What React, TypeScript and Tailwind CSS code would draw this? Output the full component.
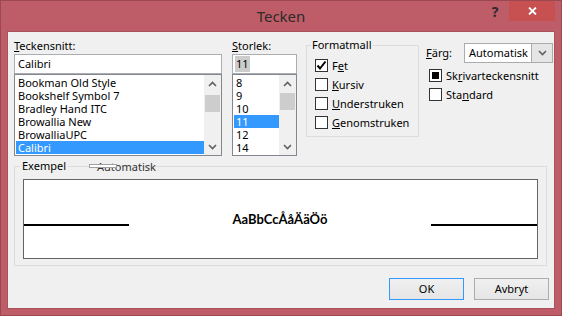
import React from 'react';

const fontRows = ['Bookman Old Style', 'Bookshelf Symbol 7', 'Bradley Hand ITC', 'Browallia New', 'BrowalliaUPC', 'Calibri'];
const sizeRows = ['8', '9', '10', '11', '12', '14'];

const Chevron: React.FC<{ up?: boolean }> = ({ up }) => (
  <svg width="9" height="6" viewBox="0 0 9 6">
    <polyline
      points={up ? '1,5 4.5,1.5 8,5' : '1,1 4.5,4.5 8,1'}
      fill="none"
      stroke="#606060"
      strokeWidth="1.6"
    />
  </svg>
);

const ScrollBar: React.FC<{ thumbTop: string }> = ({ thumbTop }) => (
  <div className="w-[17px] flex flex-col bg-[#f0f0f0]">
    <div className="h-[17px] flex items-center justify-center">
      <Chevron up />
    </div>
    <div className="flex-1">
      <div className={`${thumbTop} mx-[1px] h-[17px] bg-[#cdcdcd]`}></div>
    </div>
    <div className="h-[17px] flex items-center justify-center">
      <Chevron />
    </div>
  </div>
);

// one list box with a row highlighted
const ListBox: React.FC<{ rows: string[]; selected: number; width: string; thumbTop: string }> = ({
  rows,
  selected,
  width,
  thumbTop,
}) => (
  <div className={`${width} h-[82px] border border-[#828790] bg-white flex`}>
    <div className="flex-1 pl-[1px] pt-[1px]">
      {rows.map((r, i) => (
        <div
          key={r}
          className={`h-[13px] leading-[13px] pl-[2px] ${i === selected ? 'bg-[#3399ff] text-white' : 'text-black'}`}
        >
          {r}
        </div>
      ))}
    </div>
    <ScrollBar thumbTop={thumbTop} />
  </div>
);

const CheckBox: React.FC<{ state?: 'checked' | 'mixed' }> = ({ state }) => (
  <div className="w-[13px] h-[13px] border border-[#333333] bg-white flex items-center justify-center shrink-0">
    {state === 'checked' && (
      <svg width="11" height="11" viewBox="0 0 11 11">
        <polyline points="1.5,5.5 4,8.5 9.5,1.5" fill="none" stroke="#000" strokeWidth="2" />
      </svg>
    )}
    {state === 'mixed' && <div className="w-[7px] h-[7px] bg-black"></div>}
  </div>
);

const CheckRow: React.FC<{ state?: 'checked' | 'mixed'; children: React.ReactNode }> = ({ state, children }) => (
  <div className="h-[19px] flex items-center gap-[4px]">
    <CheckBox state={state} />
    <span className="leading-[16px]">{children}</span>
  </div>
);

const App: React.FC = () => {
  return (
    <div className="w-[562px] h-[316px] bg-[#be5c67] border border-[#9c4852] flex flex-col text-[11px] text-black font-['Noto_Sans',sans-serif]">
      {/* title bar */}
      <div className="h-[30px] grid grid-cols-[1fr_auto_1fr]">
        <div></div>
        <div className="text-[15px] text-[#2b2b2b] leading-[30px]">Tecken</div>
        <div className="flex justify-end items-start pr-[6px]">
          <div className="w-[30px] h-[20px] flex items-center justify-center text-[14px] font-bold text-[#2b2b2b] leading-none pt-[2px] pl-[2px]">
            ?
          </div>
          <div className="w-[46px] h-[20px] bg-[#c75050] flex items-center justify-center">
            <svg width="9" height="8" viewBox="0 0 9 8">
              <path d="M1 0.5 L8 7.5 M8 0.5 L1 7.5" stroke="#fff" strokeWidth="1.8" />
            </svg>
          </div>
        </div>
      </div>

      {/* client area */}
      <div className="flex-1 mx-[6px] mb-[6px] bg-[#f0f0f0] border border-[#a8525c] pt-[6px] pl-[6px] flex flex-col">
        <div className="flex items-start">
          {/* font */}
          <div className="w-[208px] flex flex-col">
            <div className="h-[16px] leading-[16px]">
              <span className="underline">T</span>eckensnitt:
            </div>
            <div className="h-[20px] border border-[#abadb3] bg-white pl-[3px] leading-[18px]">Calibri</div>
            <ListBox rows={fontRows} selected={5} width="w-[208px]" thumbTop="mt-[3px]" />
          </div>

          {/* size */}
          <div className="w-[65px] ml-[10px] flex flex-col">
            <div className="h-[16px] leading-[16px]">
              <span className="underline">S</span>torlek:
            </div>
            <div className="h-[20px] border border-[#abadb3] bg-white pl-[2px] pt-[1px] flex items-start">
              <span className="bg-[#cccccc] leading-[16px] px-[1px]">11</span>
            </div>
            <ListBox rows={sizeRows} selected={3} width="w-[65px]" thumbTop="mt-[1px]" />
          </div>

          {/* Formatmall */}
          <div className="relative w-[113px] h-[92px] ml-[9px] mt-[7px] border border-[#dcdcdc] pt-[10px] pl-[8px]">
            <div className="absolute -top-[9px] left-[4px] bg-[#f0f0f0] px-[1px] leading-[16px]">Formatmall</div>
            <CheckRow state="checked">
              F<span className="underline">e</span>t
            </CheckRow>
            <CheckRow>
              <span className="underline">K</span>ursiv
            </CheckRow>
            <CheckRow>
              <span className="underline">U</span>nderstruken
            </CheckRow>
            <CheckRow>
              <span className="underline">G</span>enomstruken
            </CheckRow>
          </div>

          {/* Färg */}
          <div className="ml-[7px] mt-[5px] flex flex-col">
            <div className="flex items-center">
              <div className="w-[38px]">
                <span className="underline">F</span>ärg:
              </div>
              <div className="w-[89px] h-[20px] border border-[#acacac] bg-white flex">
                <div className="flex-1 pl-[4px] leading-[18px]">Automatisk</div>
                <div className="w-[21px] bg-[#e5e5e5] border-l border-[#acacac] flex items-center justify-center">
                  <Chevron />
                </div>
              </div>
            </div>
            <div className="mt-[3px] pl-[3px]">
              <CheckRow state="mixed">
                Sk<span className="underline">r</span>ivarteckensnitt
              </CheckRow>
              <CheckRow>
                Sta<span className="underline">n</span>dard
              </CheckRow>
            </div>
          </div>
        </div>

        {/* Exempel */}
        <div className="relative w-[533px] h-[100px] mt-[10px] border border-[#dcdcdc] pt-[12px] px-[8px]">
          <div className="absolute -top-[9px] left-[5px] bg-[#f0f0f0] px-[2px] leading-[16px]">Exempel</div>
          <div className="absolute -top-[8px] left-[82px] leading-[16px] text-[#333]">Automatisk</div>
          <div className="absolute -top-[3px] left-[74px] w-[28px] h-[4px] border border-[#a0a0a0] bg-white"></div>
          <div className="h-[80px] border border-[#646464] bg-white pt-[32px]">
            <div className="flex items-end">
              <div className="w-[105px] h-[2px] bg-black"></div>
              <div className="flex-1 text-center font-['Lato',sans-serif] font-bold text-[13px] leading-[14px]">
                AaBbCcÅåÄäÖö
              </div>
              <div className="w-[106px] h-[2px] bg-black"></div>
            </div>
          </div>
        </div>

        {/* buttons */}
        <div className="mt-[12px] flex justify-end gap-[10px] pr-[5px]">
          <div className="w-[75px] h-[22px] border border-[#3399ff] bg-gradient-to-b from-[#f0f0f0] to-[#e5e5e5] flex items-center justify-center">
            OK
          </div>
          <div className="w-[75px] h-[22px] border border-[#acacac] bg-gradient-to-b from-[#f0f0f0] to-[#e5e5e5] flex items-center justify-center">
            Avbryt
          </div>
        </div>
      </div>
    </div>
  );
};

export default App;
